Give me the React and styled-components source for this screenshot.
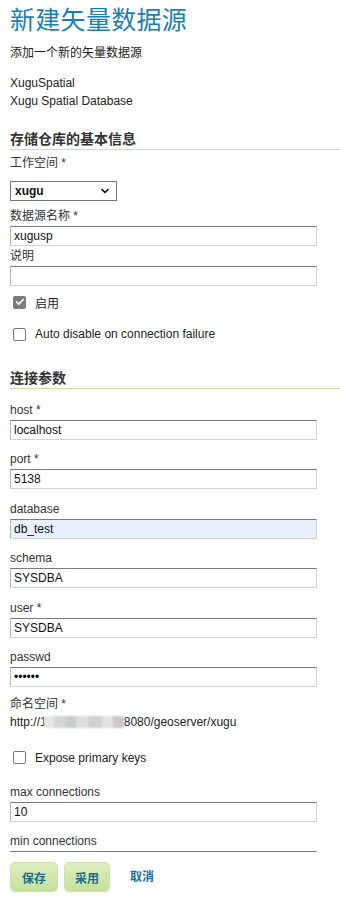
import React from "react";
import styled, { createGlobalStyle } from "styled-components";
import { ChevronDown, Check } from "lucide-react";

const GlobalStyle = createGlobalStyle`
  html, body {
    margin: 0;
    padding: 0;
    background: #fff;
  }
  body {
    font-family: "Liberation Sans", "Noto Sans CJK SC", Arial, sans-serif;
    font-size: 12px;
    color: #333;
  }
`;

const Page = styled.div`
  height: 100vh;
  display: flex;
  flex-direction: column;
  overflow: hidden;
`;

const Scroll = styled.div`
  flex: 1;
  overflow: hidden;
  padding-left: 10px;
`;

const Title = styled.h1`
  margin: 0;
  padding-top: 5px;
  font-size: 25px;
  line-height: 30px;
  font-weight: normal;
  color: #1a7fb6;
  letter-spacing: 0.3px;
`;

const Text = styled.p`
  margin: ${(p) => p.$top || 0}px 0 0;
  line-height: 18px;
  color: #222;
`;

const Section = styled.h2`
  margin: ${(p) => p.$top}px 0 0;
  font-size: 14px;
  line-height: 20px;
  font-weight: bold;
  color: #333;
  border-bottom: 1px solid #cde0a8;
`;

const Field = styled.div`
  margin-top: ${(p) => p.$top || 0}px;
  display: flex;
  flex-direction: column;
  align-items: flex-start;
`;

const Label = styled.label`
  line-height: 18px;
  margin-bottom: ${(p) => (p.$gap === undefined ? 1 : p.$gap)}px;
  color: #333;
`;

const Input = styled.input`
  box-sizing: border-box;
  width: 307px;
  height: 20px;
  margin: 0;
  padding: 0 3px;
  border: 1px solid #d2d2d2;
  border-top-color: #7a7a7a;
  border-left-color: #b8b8b8;
  background: ${(p) => (p.$autofill ? "#e8f0fe" : "#fff")};
  font-family: "Liberation Sans", Arial, sans-serif;
  font-size: 12px;
  color: #111;
  outline: none;
`;

const SelectBox = styled.div`
  box-sizing: border-box;
  width: 107px;
  height: 20px;
  border: 1px solid #767676;
  display: flex;
  align-items: center;
  justify-content: space-between;
  padding: 0 5px 0 4px;
  font-weight: bold;
  font-size: 12px;
  color: #111;
`;

const CheckRow = styled.div`
  margin-top: ${(p) => p.$top}px;
  display: flex;
  align-items: center;
  height: 18px;
  padding-left: 3px;
  gap: 9px;
  color: #222;
`;

const Box = styled.span`
  box-sizing: border-box;
  width: 13px;
  height: 13px;
  border-radius: 2px;
  display: inline-flex;
  align-items: center;
  justify-content: center;
  border: 1px solid ${(p) => (p.$checked ? "#7b7b7b" : "#767676")};
  background: ${(p) => (p.$checked ? "#7b7b7b" : "#fff")};
  color: #fff;
`;

const Url = styled.div`
  line-height: 18px;
  color: #222;
  display: flex;
  align-items: center;
`;

const Blur = styled.span`
  display: inline-block;
  width: 80px;
  height: 12px;
  margin-left: -3px;
  background: linear-gradient(
    90deg,
    #e6e6e6 0 12%,
    #d6d6d6 12% 26%,
    #c9cbcb 26% 40%,
    #dcdcdc 40% 56%,
    #cfd0d0 56% 72%,
    #e2e2e2 72% 86%,
    #c8c8c8 86% 100%
  );
  filter: blur(1px);
`;

const Footer = styled.div`
  flex: none;
  height: 47px;
  background: #fff;
  display: flex;
  align-items: flex-start;
  padding: 10px 0 0 10px;
  box-sizing: border-box;
  gap: 6px;
`;

const Button = styled.button`
  width: ${(p) => p.$w}px;
  height: 30px;
  border: 1px solid #c9e1a6;
  border-radius: 5px;
  background: linear-gradient(#ddeec0, #c6e09b);
  font-family: "Noto Sans CJK SC", sans-serif;
  font-weight: bold;
  font-size: 12px;
  color: #1d6a8a;
  padding: 0;
`;

const Cancel = styled.a`
  margin-left: 14px;
  line-height: 30px;
  font-weight: bold;
  font-size: 12px;
  color: #1a6e9e;
  text-decoration: none;
`;

const Checkbox = ({ checked, top, children }) => (
  <CheckRow $top={top}>
    <Box $checked={checked}>
      {checked && <Check size={10} strokeWidth={4} />}
    </Box>
    <span>{children}</span>
  </CheckRow>
);

const TextField = ({ label, value, type, autofill, top }) => (
  <Field $top={top}>
    <Label>{label}</Label>
    <Input readOnly type={type} value={value} $autofill={autofill} />
  </Field>
);

const conn = [
  { label: "host *", value: "localhost" },
  { label: "port *", value: "5138" },
  { label: "database", value: "db_test", autofill: true },
  { label: "schema", value: "SYSDBA" },
  { label: "user *", value: "SYSDBA" },
  { label: "passwd", value: "SYSDBA", type: "password" },
];

export default function App() {
  return (
    <Page>
      <GlobalStyle />
      <Scroll>
        <Title>新建矢量数据源</Title>
        <Text $top={9}>添加一个新的矢量数据源</Text>
        <Text $top={12}>XuguSpatial</Text>
        <Text>Xugu Spatial Database</Text>

        <Section $top={19}>存储仓库的基本信息</Section>
        <Field $top={4}>
          <Label $gap={9}>工作空间 *</Label>
          <SelectBox>
            <span>xugu</span>
            <ChevronDown size={12} strokeWidth={3.5} color="#111" />
          </SelectBox>
        </Field>
        <TextField top={6} label="数据源名称 *" value="xugusp" />
        <TextField top={1} label="说明" value="" />
        <Checkbox checked top={7}>启用</Checkbox>
        <Checkbox top={14}>Auto disable on connection failure</Checkbox>

        <Section $top={25}>连接参数</Section>
        {conn.map((f, i) => (
          <TextField
            key={f.label}
            top={i === 0 ? 12 : 10.4}
            label={f.label}
            value={f.value}
            type={f.type}
            autofill={f.autofill}
          />
        ))}
        <Field $top={8}>
          <Label $gap={0}>命名空间 *</Label>
          <Url>
            http://1<Blur />8080/geoserver/xugu
          </Url>
        </Field>
        <Checkbox top={18}>Expose primary keys</Checkbox>
        <TextField top={16} label="max connections" value="10" />
        <TextField top={10} label="min connections" value="1" />
      </Scroll>
      <Footer>
        <Button $w={48}>保存</Button>
        <Button $w={46}>采用</Button>
        <Cancel href="#">取消</Cancel>
      </Footer>
    </Page>
  );
}
